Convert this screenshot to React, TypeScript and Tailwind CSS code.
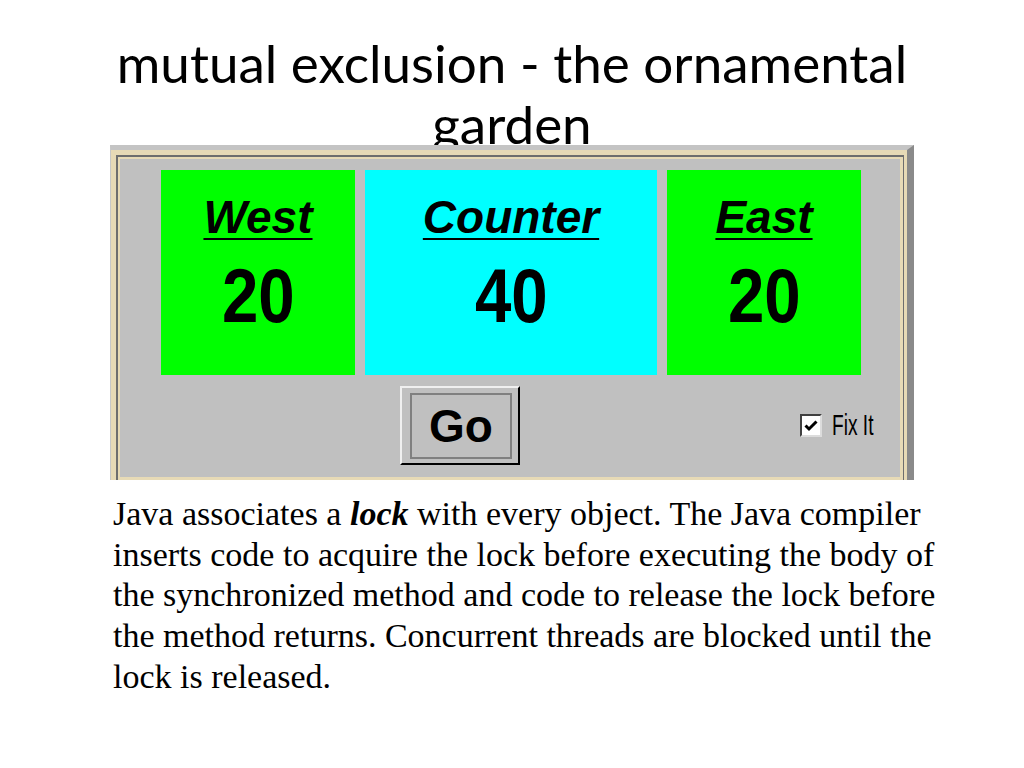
import React from 'react'

const counters = [
  { label: 'West', value: 20, bg: 'bg-[#00ff00]', w: 'w-[194px]' },
  { label: 'Counter', value: 40, bg: 'bg-[#00ffff]', w: 'w-[292px]' },
  { label: 'East', value: 20, bg: 'bg-[#00ff00]', w: 'w-[194px]' },
]

function CounterBox({ label, value, bg, w }: { label: string; value: number; bg: string; w: string }) {
  return (
    <div className={`${w} ${bg} h-[205px] flex flex-col items-center pt-[24px]`}>
      <span className="font-['Liberation_Sans',Arial,sans-serif] font-bold italic text-[46px] leading-[46px] text-black underline decoration-2 underline-offset-[5px]">
        {label}
      </span>
      <span className="mt-[18px] font-['Liberation_Sans',Arial,sans-serif] font-bold text-[76px] leading-[75px] text-black scale-x-[0.86]">
        {value}
      </span>
    </div>
  )
}

function GoButton() {
  return (
    <button className="w-[120px] h-[79px] bg-[#c0c0c0] border-2 border-t-[#f0f0f0] border-l-[#f0f0f0] border-r-black border-b-black p-0">
      <div className="mt-[5px] ml-[8px] mr-[6px] mb-[4px] h-[66px] border-2 border-[#808080] flex items-center justify-center">
        <span className="font-['Liberation_Sans',Arial,sans-serif] font-bold text-[46px] leading-none text-black">Go</span>
      </div>
    </button>
  )
}

function FixIt() {
  return (
    <label className="flex items-center gap-[10px]">
      <span className="w-[22px] h-[23px] bg-white border-2 border-t-[#404040] border-l-[#404040] border-r-[#dcdcdc] border-b-[#dcdcdc] flex items-center justify-center">
        <svg width="14" height="12" viewBox="0 0 14 12">
          <polyline points="1.5,5.5 5,9 12.5,1.5" fill="none" stroke="black" strokeWidth="3" />
        </svg>
      </span>
      <span className="w-[44px] font-['Liberation_Sans',Arial,sans-serif] text-[29px] leading-none text-black whitespace-nowrap scale-x-[0.66] origin-left">
        Fix It
      </span>
    </label>
  )
}

export default function App() {
  return (
    <div className="w-[1024px] h-[768px] bg-white pt-[32px] overflow-hidden">
      {/* Title, second line runs under the applet as in the slide */}
      <h1 className="mx-auto w-[830px] h-[113px] overflow-hidden text-center font-['Lato','Noto_Sans',sans-serif] text-[53px] leading-[61px] text-black">
        mutual exclusion - the ornamental garden
      </h1>

      {/* Applet frame */}
      <div className="mx-auto w-[804px] h-[335px] bg-[#e7dab6] border-t-[5px] border-t-[#c4c4c4] border-l border-l-[#c8c8c8] border-r-[7px] border-r-[#8a8a8a] pt-[5px] pl-[5px] pr-[3px]">
        <div className="h-full border-t-2 border-l-2 border-r border-[#6e6e6e] pt-[2px] pl-[2px] pr-[3px] pb-[3px]">
          <div className="h-full bg-[#c0c0c0] pt-[11px] pl-[41px] pr-[39px]">
            <div className="flex gap-[10px]">
              {counters.map(c => (
                <CounterBox key={c.label} {...c} />
              ))}
            </div>
            <div className="flex items-center mt-[11px] pl-[239px]">
              <GoButton />
              <div className="flex-1" />
              <div className="mr-[-15px]">
                <FixIt />
              </div>
            </div>
          </div>
        </div>
      </div>

      {/* Body text */}
      <p className="mt-[14px] pl-[113px] font-['Liberation_Serif','Times_New_Roman',serif] text-[34px] leading-[40.7px] text-black whitespace-nowrap">
        Java associates a <b><i>lock</i></b> with every object. The Java compiler
        <br />
        inserts code to acquire the lock before executing the body of
        <br />
        the synchronized method and code to release the lock before
        <br />
        the method returns. Concurrent threads are blocked until the
        <br />
        lock is released.
      </p>
    </div>
  )
}
